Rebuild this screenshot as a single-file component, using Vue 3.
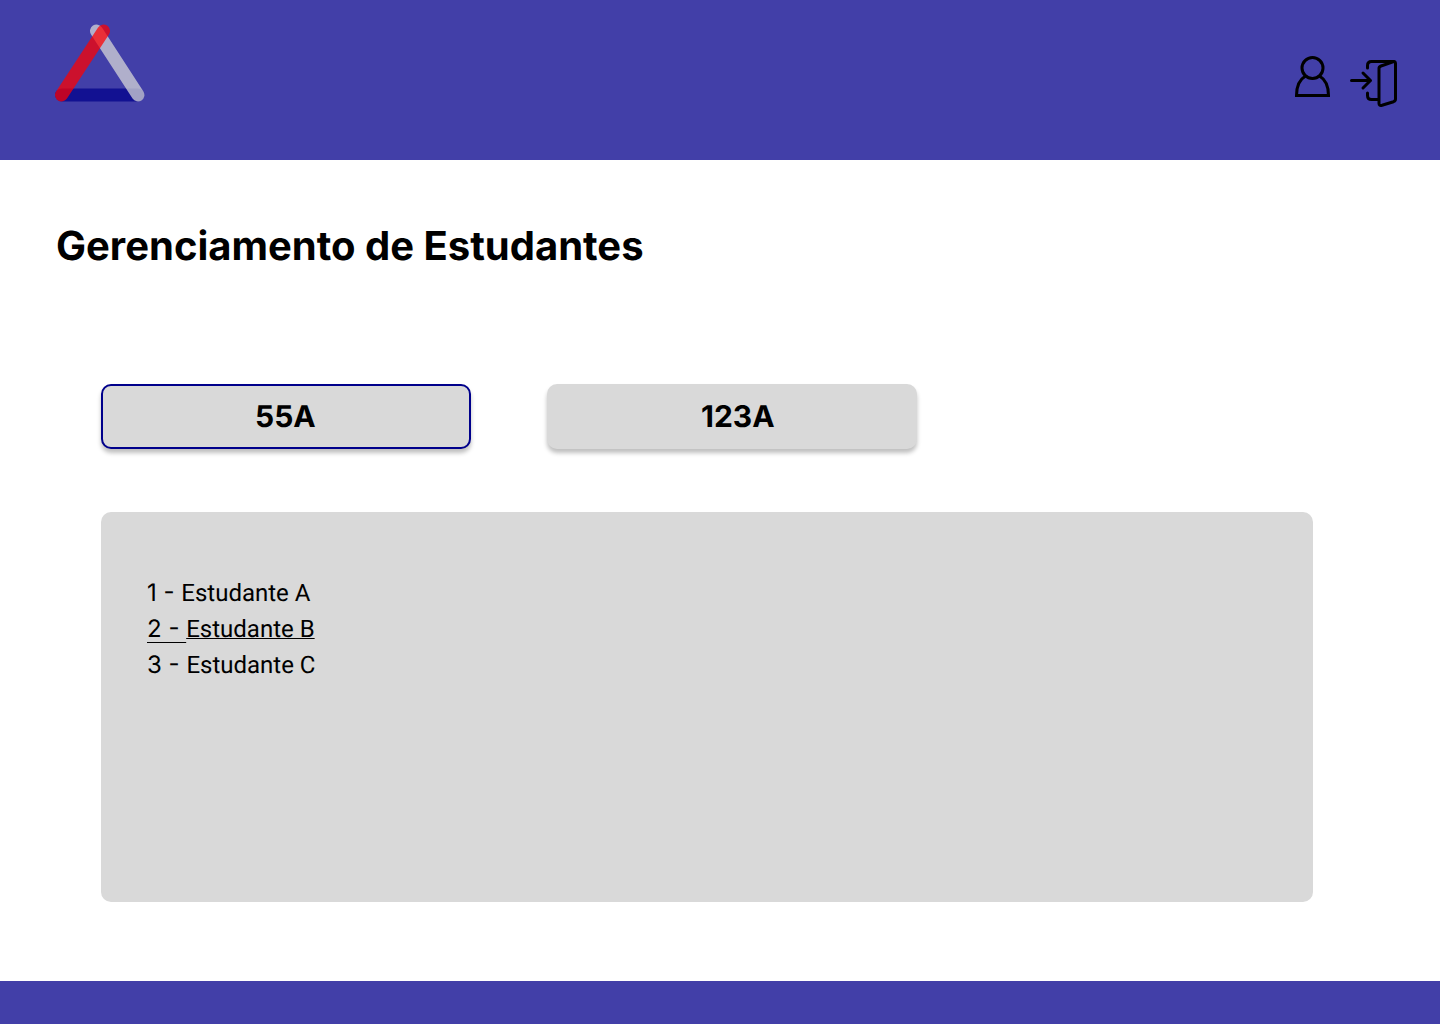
<script setup>
import { ref } from 'vue'

const classes = [
  { name: '55A', students: ['Estudante A', 'Estudante B', 'Estudante C'] },
  { name: '123A', students: [] },
]
const current = ref(0)
const highlighted = ref(1)
</script>

<template>
  <div class="page">
    <header class="topbar">
      <a class="logo" href="#" aria-label="Início">
        <svg width="90" height="78" viewBox="0 0 90 78" fill="none" stroke-width="13" stroke-linecap="round">
          <path d="M6.5 71H83" stroke="#00008b" stroke-opacity=".73" />
          <path d="M41.5 7L83 71" stroke="#d9d9d9" stroke-opacity=".73" />
          <path d="M48.5 7L6.5 71" stroke="#f00" stroke-opacity=".73" />
        </svg>
      </a>
      <nav class="actions">
        <button class="icon-button" type="button" aria-label="Perfil">
          <svg width="35" height="41" viewBox="0 0 35 41" fill="none" stroke="#000" stroke-width="3">
            <circle cx="17.5" cy="12" r="10.5" />
            <path d="M10.5 20C4.5 23.5 1.5 30 1.5 39.5H33.5C33.5 30 30.5 23.5 24.5 20" />
          </svg>
        </button>
        <button class="icon-button exit" type="button" aria-label="Sair">
          <svg width="48" height="48" viewBox="0 0 48 48" fill="none" stroke="#000" stroke-width="3" stroke-linecap="round" stroke-linejoin="round">
            <path d="M1.5 21.5H20.5M13 14L20.5 21.5L13 29" />
            <path d="M17.5 9V6.5Q17.5 2.5 21.5 2.5H43.5" />
            <path d="M17.5 34V36.500Q17.5 40.500 21.5 40.500H28" />
            <path d="M31 7L43 2.800Q45.500 2 45.500 4.500V40Q45.500 42 43.500 42.700L32 46.200Q29 47 29 44.500V9.500Q29 7.700 31 7Z" />
          </svg>
        </button>
      </nav>
    </header>

    <main class="content">
      <h1>Gerenciamento de Estudantes</h1>
      <div class="body">
        <div class="classes">
          <button
            v-for="(item, index) in classes"
            :key="item.name"
            type="button"
            class="class-button"
            :class="{ active: index === current }"
            :aria-pressed="index === current"
            @click="current = index"
          >
            {{ item.name }}
          </button>
        </div>
        <section class="panel" aria-label="Estudantes">
          <ul>
            <li
              v-for="(student, index) in classes[current].students"
              :key="student"
              :class="{ highlighted: index === highlighted }"
              @mouseenter="highlighted = index"
            ><span class="number">{{ index + 1 }} -&nbsp;</span><a href="#">{{ student }}</a></li>
          </ul>
        </section>
      </div>
    </main>

    <footer class="bottombar"></footer>
  </div>
</template>

<style>
body {
  margin: 0;
  background: #fff;
}
</style>

<style scoped>
.page {
  display: flex;
  flex-direction: column;
  min-height: 100vh;
  color: #000;
  font-family: Inter, sans-serif;
  text-rendering: geometricPrecision;
}

.topbar {
  box-sizing: border-box;
  display: flex;
  justify-content: space-between;
  align-items: flex-start;
  min-height: 160px;
  padding: 24px 42px 24px 55px;
  background: #423fa8;
}

.icon-button svg,
.logo svg {
  display: block;
}

.actions {
  display: flex;
  gap: 20px;
  padding-top: 32px;
}

.icon-button {
  padding: 0;
  border: 0;
  background: none;
  cursor: pointer;
  align-self: flex-start;
}

.exit {
  padding-top: 3px;
}

.content {
  flex: 1;
  padding: 62px 56px 79px;
}

h1 {
  margin: 0;
  font-size: 40px;
  line-height: 48px;
  font-weight: 700;
}

.body {
  padding: 114px 71px 0 45px;
}

.classes {
  display: flex;
  flex-wrap: wrap;
  gap: 24px 76px;
}

.class-button {
  box-sizing: border-box;
  width: 370px;
  height: 65px;
  padding: 0 0 0 152px;
  border: 2px solid #d9d9d9;
  border-radius: 10px;
  background: #d9d9d9;
  box-shadow: 0 4px 4px rgba(0, 0, 0, 0.25);
  color: #000;
  font: 700 30px/36px Inter, sans-serif;
  text-align: left;
  text-rendering: inherit;
  cursor: pointer;
}

.class-button.active {
  border-color: #00008b;
}

.panel {
  box-sizing: border-box;
  min-height: 390px;
  margin-top: 63px;
  padding: 63px 46px;
  border-radius: 10px;
  background: #d9d9d9;
}

ul {
  margin: 0;
  padding: 0;
  list-style: none;
}

li {
  font-size: 24px;
  line-height: 36px;
}

li a {
  color: inherit;
  font-family: Roboto, sans-serif;
  text-decoration: none;
}

.highlighted .number,
.highlighted a {
  text-decoration: underline;
  text-decoration-thickness: 1px;
  text-decoration-skip-ink: none;
}

.highlighted .number {
  text-underline-offset: 5px;
}

.bottombar {
  height: 43px;
  background: #423fa8;
}
</style>
